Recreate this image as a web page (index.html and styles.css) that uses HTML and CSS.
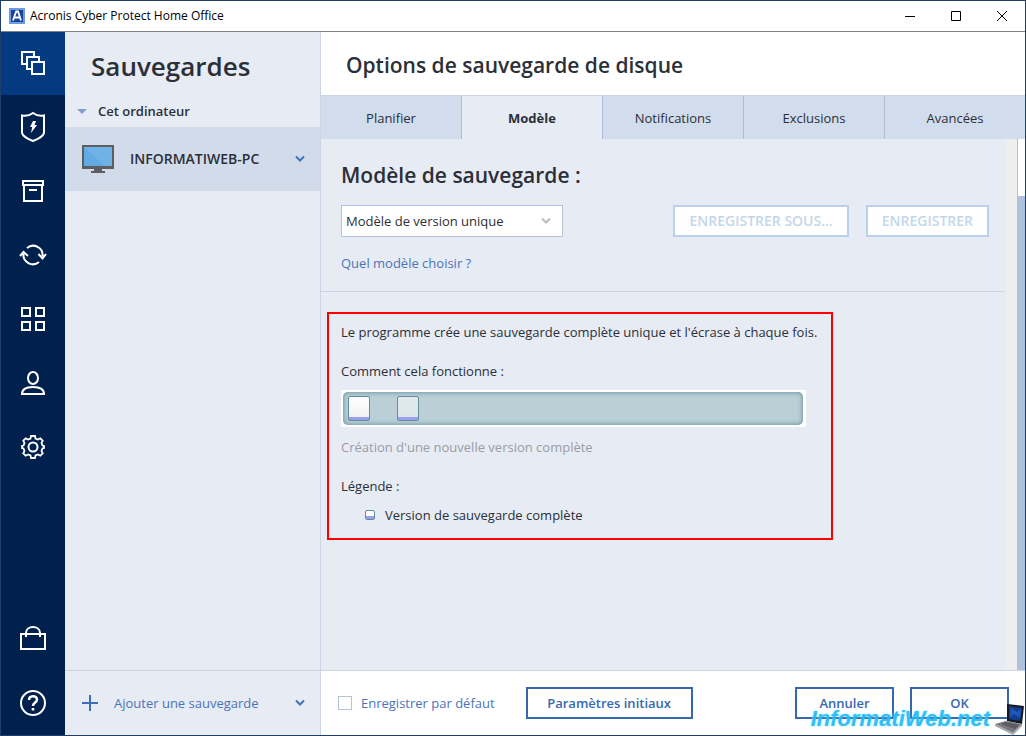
FILE: index.html
```html
<!DOCTYPE html>
<html lang="fr">
<head>
    <meta charset="UTF-8">
    <meta name="viewport" content="width=device-width, initial-scale=1.0">
    <title>Acronis Cyber Protect Home Office</title>
    <link rel="stylesheet" href="styles.css">
</head>
<body>
    <div class="window">
        <header class="titlebar">
            <svg class="app-icon" width="16" height="16" viewBox="0 0 16 16">
                <rect width="16" height="16" fill="#6c9be0"/>
                <rect x="2" y="2" width="12" height="12" fill="#1c449c"/>
                <path d="M4 12.500L7.200 3.500H9L12 12.500M5 9.500h6" fill="none" stroke="#fff" stroke-width="1.800"/>
            </svg>
            <span class="app-title">Acronis Cyber Protect Home Office</span>
            <button class="win-btn" aria-label="Réduire"><svg width="10" height="10" viewBox="0 0 10 10"><path d="M0 5.500h10"/></svg></button>
            <button class="win-btn" aria-label="Agrandir"><svg width="10" height="10" viewBox="0 0 10 10"><path d="M.5.5h9v9h-9z"/></svg></button>
            <button class="win-btn" aria-label="Fermer"><svg width="10" height="10" viewBox="0 0 10 10"><path d="M0 0l10 10M10 0L0 10"/></svg></button>
        </header>

        <div class="app">
            <nav class="sidebar">
                <button class="nav-btn active" aria-label="Sauvegardes">
                    <svg width="28" height="28" viewBox="0 0 28 28"><path d="M7 15H3V3h12v4M12 20H8V8h12v4M13 13h12v12H13z"/></svg>
                </button>
                <button class="nav-btn" aria-label="Protection">
                    <svg width="28" height="32" viewBox="0 0 28 32"><path d="M3 4.500c4 .7 8-.2 11-2.500 3 2.300 7 3.200 11 2.500V22c-1 4-6 6-11 8-5-2-10-4-11-8z"/><path class="solid" d="M14 10h3l-1.500 4H18l-6 8 1.200-6H11z"/></svg>
                </button>
                <button class="nav-btn" aria-label="Archive">
                    <svg width="28" height="28" viewBox="0 0 28 28"><path d="M4 4h20v4H4zM5 8v16h18V8M10 13h8"/></svg>
                </button>
                <button class="nav-btn" aria-label="Synchronisation">
                    <svg width="28" height="28" viewBox="0 0 28 28"><path d="M8 7a9.500 9.500 0 0 1 15.500 8.500M20 21A9.500 9.500 0 0 1 4.500 12.500M19.500 13l4 4.500 3.500-4.500M1 15l3.500-4 4.500 4"/></svg>
                </button>
                <button class="nav-btn" aria-label="Outils">
                    <svg width="28" height="28" viewBox="0 0 28 28"><path d="M3 3h8v8H3zM17 3h8v8h-8zM3 17h8v8H3zM17 17h8v8h-8z"/></svg>
                </button>
                <button class="nav-btn" aria-label="Compte">
                    <svg width="28" height="28" viewBox="0 0 28 28"><ellipse cx="14" cy="9" rx="5" ry="6"/><path d="M3 25c0-5 4-7 11-7s11 2 11 7z"/></svg>
                </button>
                <button class="nav-btn" aria-label="Paramètres">
                    <svg width="28" height="28" viewBox="0 0 28 28"><circle cx="14" cy="14" r="4.500"/><path d="M12 3h4l.5 2.500 2.500 1 2.300-1.200 2.400 2.400-1.200 2.300 1 2.500 1.500.5v2l-1.500.5-1 2.500 1.200 2.300-2.400 2.400-2.300-1.200-2.500 1L16 25h-4l-.5-2.500-2.500-1-2.300 1.200-2.400-2.400L5.500 18l-1-2.500L3 15v-2l1.500-.5 1-2.500-1.200-2.300 2.400-2.400L9 6.500l2.500-1z" stroke-width="1.800"/></svg>
                </button>
                <span class="spacer"></span>
                <button class="nav-btn" aria-label="Boutique">
                    <svg width="28" height="28" viewBox="0 0 28 28"><path d="M2 9h24v15H2zM7 12V8c0-8 14-8 14 0v4"/></svg>
                </button>
                <button class="nav-btn" aria-label="Aide">
                    <svg width="28" height="28" viewBox="0 0 28 28"><circle cx="14" cy="14" r="12"/><path d="M10 11c0-5 8-5 8-.5 0 3-4 3-4 6.500" stroke-width="2.500"/><path class="solid" d="M12.700 19h2.600v2.600h-2.600z"/></svg>
                </button>
            </nav>

            <aside class="backups">
                <h1 class="backups-title">Sauvegardes</h1>
                <div class="group"><span class="triangle"></span>Cet ordinateur</div>
                <button class="backup-item">
                    <svg width="32" height="28" viewBox="0 0 32 28">
                        <path d="M0 0h32v24H0z" fill="#5e5e60"/>
                        <path d="M2 2h28v19H2z" fill="#62aae4"/>
                        <path d="M2 2h28v19h-7z" fill="#6fb2e8"/>
                        <path d="M12 24h8v2h3v2H9v-2h3z" fill="#5e5e60"/>
                    </svg>
                    <span class="backup-name">INFORMATIWEB-PC</span>
                    <svg class="chevron" width="10" height="8" viewBox="0 0 10 8"><path d="M1 1.500l4 4 4-4"/></svg>
                </button>
                <button class="add-backup">
                    <svg class="plus" width="16" height="16" viewBox="0 0 16 16"><path d="M0 8h16M8 0v16"/></svg>
                    <span class="add-name">Ajouter une sauvegarde</span>
                    <svg class="chevron" width="10" height="8" viewBox="0 0 10 8"><path d="M1 1.500l4 4 4-4"/></svg>
                </button>
            </aside>

            <main class="options">
                <h2 class="options-title">Options de sauvegarde de disque</h2>
                <div class="tabs" role="tablist">
                    <button class="tab" role="tab">Planifier</button>
                    <button class="tab selected" role="tab" aria-selected="true">Modèle</button>
                    <button class="tab" role="tab">Notifications</button>
                    <button class="tab" role="tab">Exclusions</button>
                    <button class="tab" role="tab">Avancées</button>
                </div>

                <div class="scroll-area">
                    <div class="content">
                        <section class="scheme">
                            <h3><label for="scheme">Modèle de sauvegarde :</label></h3>
                            <div class="scheme-row">
                                <div class="select-wrap">
                                    <select id="scheme">
                                        <option>Modèle de version unique</option>
                                    </select>
                                    <svg class="chevron" width="10" height="8" viewBox="0 0 10 8"><path d="M1 1.500l4 4 4-4"/></svg>
                                </div>
                                <span class="spacer"></span>
                                <button class="btn" disabled>ENREGISTRER SOUS...</button>
                                <button class="btn" disabled>ENREGISTRER</button>
                            </div>
                            <a class="help-link" href="#">Quel modèle choisir ?</a>
                        </section>

                        <section class="explain">
                            <p>Le programme crée une sauvegarde complète unique et l'écrase à chaque fois.</p>
                            <p>Comment cela fonctionne :</p>
                            <div class="timeline">
                                <div class="track">
                                    <span class="version"></span>
                                    <span class="version old"></span>
                                </div>
                            </div>
                            <p class="caption">Création d'une nouvelle version complète</p>
                            <p>Légende :</p>
                            <p class="legend"><span class="legend-icon"></span>Version de sauvegarde complète</p>
                        </section>
                    </div>
                    <div class="scrollbar"><div class="thumb"></div></div>
                </div>

                <footer class="actions">
                    <input type="checkbox" id="default">
                    <label for="default">Enregistrer par défaut</label>
                    <button class="btn initial">Paramètres initiaux</button>
                    <span class="spacer"></span>
                    <button class="btn small">Annuler</button>
                    <button class="btn small">OK</button>
                </footer>
            </main>
        </div>

        <div class="watermark">
            <span>InformatiWeb.net</span>
            <svg width="32" height="32" viewBox="0 0 32 32">
                <path d="M13 1l17 2-2 18-15-3z" fill="#17191f"/>
                <path d="M15 3l13 2-2 13-11-2z" fill="#123c94"/>
                <path d="M17 5l6 4 4-3-1 9-6-4-4 3z" fill="#1f57b4"/>
                <path d="M12 18l16 3-9 9L1 21z" fill="#77797e"/>
                <path d="M11 19l14 3-4 4-14-5z" fill="#5a5c61"/>
                <path d="M1 21l18 9 9-9v2l-9 9-18-9z" fill="#a2a4a8"/>
            </svg>
        </div>
    </div>
</body>
</html>
```
FILE: styles.css
```css
* {
    box-sizing: border-box;
}
body {
    margin: 0;
    font-family: 'Open Sans', 'Noto Sans', sans-serif;
    font-size: 13px;
    line-height: 20px;
    color: #2b2f38;
}
h1, h2, h3, p {
    margin: 0;
    font-weight: 600;
}
p {
    font-weight: 400;
}
button, select {
    font: inherit;
    color: inherit;
    border: none;
    border-radius: 0;
    padding: 0;
    background: none;
    cursor: pointer;
}
svg {
    display: block;
    flex: none;
}
.spacer {
    flex: 1;
}
.window {
    position: relative;
    display: flex;
    flex-direction: column;
    min-height: 100vh;
    border: 1px solid #1f3f68;
    background-color: #fff;
}

/* Title bar */
.titlebar {
    display: flex;
    align-items: center;
    height: 30px;
    padding-left: 8px;
    box-shadow: 0 1px 0 #7f8287;
    z-index: 1;
    font-size: 12px;
    color: #000;
}
.app-title {
    flex: 1;
    margin-left: 5px;
}
.win-btn {
    display: flex;
    justify-content: center;
    width: 46px;
}
.win-btn svg {
    fill: none;
    stroke: #000;
}
.app {
    display: flex;
    flex: 1;
}

/* Left navigation */
.sidebar {
    display: flex;
    flex-direction: column;
    width: 64px;
    background-color: #00204d;
}
.nav-btn {
    display: flex;
    align-items: center;
    justify-content: center;
    height: 64px;
}
.nav-btn.active {
    background-color: #033a80;
}
.nav-btn svg {
    fill: none;
    stroke: #fff;
    stroke-width: 2;
}
.nav-btn .solid {
    fill: #fff;
    stroke: none;
}

/* Backup list */
.backups {
    display: flex;
    flex-direction: column;
    width: 256px;
    background-color: #e7ebf4;
    border-right: 1px solid #cbd5e6;
}
.backups-title {
    padding: 19px 26px 13px;
    font-size: 26px;
    line-height: 32px;
}
.group {
    display: flex;
    align-items: center;
    height: 32px;
    padding-left: 12px;
    font-weight: 600;
}
.triangle {
    margin-right: 11px;
    border: 5px solid transparent;
    border-top-color: #7e9fd0;
    border-bottom: none;
}
.backup-item, .add-backup {
    display: flex;
    align-items: center;
    height: 64px;
    padding: 0 15px 0 17px;
    text-align: left;
}
.backup-item {
    background-color: #d2dbea;
}
.backup-name {
    flex: 1;
    margin-left: 16px;
    font-size: 14px;
    font-weight: 600;
}
.add-backup {
    margin-top: auto;
    height: 65px;
    border-top: 1px solid #cbd5e6;
    color: #4b74b8;
}
.add-name {
    flex: 1;
    margin-left: 16px;
}
.chevron {
    fill: none;
    stroke: #4373b9;
    stroke-width: 2;
}
.plus {
    stroke: #3d6fb6;
    stroke-width: 2;
}

/* Options panel */
.options {
    display: flex;
    flex-direction: column;
    flex: 1;
    min-width: 0;
}
.options-title {
    padding: 18px 25px 14px;
    font-size: 21px;
    line-height: 32px;
}
.tabs {
    display: flex;
    background-color: #d1dcec;
    border-top: 1px solid #cbd5e6;
}
.tab {
    flex: 1;
    height: 43px;
    border-right: 1px solid #adbbd3;
}
.tab:last-child {
    border-right: none;
}
.tab.selected {
    background-color: #e7ebf4;
    font-weight: 700;
}
.scroll-area {
    display: flex;
    flex: 1;
    background-color: #e7ebf4;
}
.content {
    flex: 1;
}
.scrollbar {
    width: 20px;
    border-left: 12px solid #eee;
    background-color: #b0c1de;
}
.thumb {
    height: 57px;
    margin-left: 1px;
    background-color: #fff;
}
.scheme {
    padding: 20px 16px 18px 20px;
    border-bottom: 1px solid #cbd5e6;
}
.scheme h3 {
    margin-bottom: 14px;
    font-size: 21px;
    line-height: 32px;
}
.scheme-row {
    display: flex;
    gap: 17px;
    margin-bottom: 16px;
}
.select-wrap {
    position: relative;
    width: 222px;
}
.select-wrap select {
    appearance: none;
    width: 100%;
    height: 32px;
    padding: 0 4px;
    border: 1px solid #b3c1db;
    background-color: #fff;
}
.select-wrap .chevron {
    position: absolute;
    right: 12px;
    top: 12px;
    stroke: #b9bcc2;
    pointer-events: none;
}
.btn {
    height: 32px;
    padding: 0 14px;
    border: 2px solid #3569ae;
    background-color: #fff;
    color: #3569ae;
    font-weight: 600;
}
.btn:disabled {
    border-color: #b9d1ea;
    color: #c3d7ea;
    font-size: 14px;
    cursor: default;
}
.help-link {
    display: block;
    color: #4b74b8;
    text-decoration: none;
}

/* Scheme explanation */
.explain {
    width: fit-content;
    margin: 20px 6px;
    padding: 8px 14px 13px 12px;
    border: 2px solid #f00;
}
.explain p {
    margin-bottom: 19px;
}
.explain .timeline {
    width: 465px;
    margin: -10px 0 10px;
    padding: 2px 3px 2px 2px;
    background-color: #fff;
}
.track {
    display: flex;
    gap: 27px;
    height: 33px;
    padding: 4px 5px;
    border-radius: 5px;
    background-color: #bacfd6;
    box-shadow: inset 0 0 4px 1px #7298a5;
}
.version {
    width: 22px;
    height: 25px;
    border: 1px solid #608f9c;
    border-radius: 2px;
    background: linear-gradient(#fff, #f2f2f2 20px, #9c9fee 20px);
}
.version.old {
    background: linear-gradient(#e3eaed, #dce6e9 20px, #9c9fee 20px);
}
.explain .caption {
    color: #989da6;
}
.explain .legend {
    display: flex;
    align-items: center;
    margin: -10px 0 0 24px;
}
.legend-icon {
    width: 10px;
    height: 10px;
    margin-right: 10px;
    border: 1px solid #608f9c;
    border-radius: 2px;
    background: linear-gradient(#fff 5px, #9c9fee 5px);
}

/* Footer */
.actions {
    display: flex;
    align-items: center;
    height: 65px;
    padding: 0 16px 0 17px;
    border-top: 1px solid #cbd5e6;
    color: #4b74b8;
}
.actions input {
    appearance: none;
    width: 14px;
    height: 14px;
    margin: 0 9px 0 0;
    border: 1px solid #b3c1db;
    background-color: #fff;
}
.actions input:checked {
    background-color: #3569ae;
}
.initial {
    width: 167px;
    margin-left: 31px;
}
.small {
    width: 99px;
    margin-left: 16px;
}
.watermark {
    position: absolute;
    right: -1px;
    bottom: 0;
    display: flex;
    align-items: center;
    gap: 4px;
    font: italic 700 22px/32px 'Liberation Sans', sans-serif;
    color: rgba(30, 184, 244, 0.85);
    text-shadow: 0 0 2px rgba(90, 215, 255, 0.8);
    pointer-events: none;
}
```
